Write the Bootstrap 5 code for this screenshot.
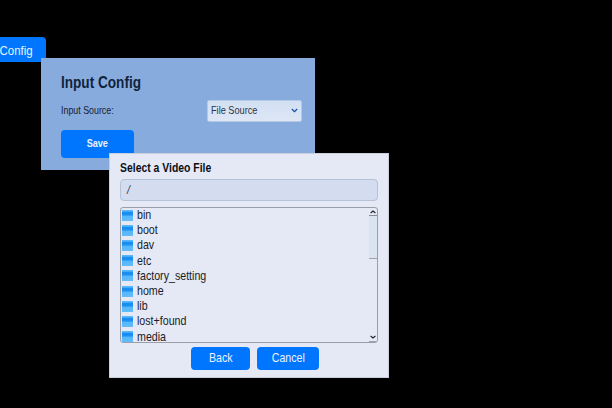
<!DOCTYPE html>
<html lang="en">
<head>
<meta charset="utf-8">
<title>Input Config</title>
<link href="https://cdn.jsdelivr.net/npm/bootstrap@5.3.0/dist/css/bootstrap.min.css" rel="stylesheet">
<style>
body{background:#000;width:612px;height:408px;font-family:"Liberation Sans",Arial,sans-serif;color:#14202e;line-height:1}
.stage{width:612px;height:408px}
.cond{display:inline-block;white-space:nowrap;transform:scaleX(.86);transform-origin:0 50%}
.mid{transform-origin:50% 50%}
.btn-app{background:#0075fd;color:#e9f3ff;border:0;border-radius:4px;padding:0;line-height:1;display:flex;align-items:center;justify-content:center;font-size:12.4px}
.tab-config{left:-30px;top:37px;width:75.5px;height:25px;border-radius:4px;font-size:13px;justify-content:flex-end;padding:1px 12.5px 0 0}
.tab-config .cond{transform:scaleX(.88);transform-origin:100% 50%}
.panel{left:41px;top:58px;width:273.5px;height:111.5px;background:#88abde;padding:16px 13px 0 20px}
.panel-title{font-size:15.8px;font-weight:700;height:17px;color:#10233c}
.source-row{margin-top:8px;height:23px;font-size:10.8px}
.source-row .cond{transform:scaleX(.82)}
.source-pick{width:94.5px;height:22px;background:linear-gradient(#d3e0f3,#dde6f5);border:1px solid #b5c8e6;border-radius:2px;padding:0 3px;font-size:11.2px;color:#2b3646}
.btn-save{width:73px;height:28px;margin-top:8px;padding-bottom:1px;font-size:11.4px;font-weight:700}
.btn-save .cond{transform:scaleX(.8)}
.dialog-box{left:109px;top:153px;width:279.5px;height:224.5px;background:#e5e9f5;border:1px solid #c9cedd;padding:7px 9.5px 0 10px}
.dialog-title{font-size:12.25px;font-weight:700;height:13px;color:#0b0e15}
.dialog-title .cond{transform:scaleX(.85)}
.path-box{margin-top:5px;height:22px;background:#d4ddf0;border:1px solid #b5c2d8;border-radius:4px;padding-left:6px;font-size:12.4px;font-style:italic;color:#30394a}
.file-box{margin-top:6px;height:135.5px;border:1px solid #9a9ea9;border-radius:3px;overflow:hidden}
.file-list{margin-top:-.4px}
.file-row{height:15.2px;font-size:12.4px;padding-left:1px;color:#1a1d26}
.folder{width:11px;height:11px;margin-right:4px;background:linear-gradient(#58b8fa 0 10%,#1589ee 24%,#1e94f4 46%,#55b8fb 56%,#63bcfa 100%)}
.bar{width:8px;font-size:0}
.bar-thumb{height:44px;background:#dce3f0;border-top:1px solid #858b98;border-bottom:1px solid #9ba2b0}
.bar-end{border-bottom:1px solid #9ba2b0}
.actions{margin-top:4.5px;gap:7px;padding-left:12px}
.actions .btn-app{height:22.5px}
.btn-back{width:59px}.btn-cancel{width:62px}
</style>
</head>
<body class="overflow-hidden">
<main class="stage position-relative overflow-hidden">
  <button class="btn btn-app tab-config position-absolute"><span class="cond">Config</span></button>

  <section class="panel position-absolute">
    <h1 class="panel-title m-0"><span class="cond">Input Config</span></h1>
    <div class="source-row d-flex align-items-center justify-content-between">
      <span class="cond">Input Source:</span>
      <div class="source-pick d-flex align-items-center justify-content-between">
        <span class="cond">File Source</span>
        <svg width="7" height="5" viewBox="0 0 7 5" fill="none" stroke="#1b4fa0" stroke-width="1.3"><path d="M.8 1 3.5 3.6 6.2 1"/></svg>
      </div>
    </div>
    <button class="btn btn-app btn-save"><span class="cond mid">Save</span></button>
  </section>

  <section class="dialog-box position-absolute">
    <h2 class="dialog-title m-0"><span class="cond">Select a Video File</span></h2>
    <div class="path-box d-flex align-items-center"><span class="cond">/</span></div>
    <div class="file-box d-flex">
      <div class="file-list flex-grow-1">
        <div class="file-row d-flex align-items-center"><i class="folder"></i><span class="cond">bin</span></div>
        <div class="file-row d-flex align-items-center"><i class="folder"></i><span class="cond">boot</span></div>
        <div class="file-row d-flex align-items-center"><i class="folder"></i><span class="cond">dav</span></div>
        <div class="file-row d-flex align-items-center"><i class="folder"></i><span class="cond">etc</span></div>
        <div class="file-row d-flex align-items-center"><i class="folder"></i><span class="cond">factory_setting</span></div>
        <div class="file-row d-flex align-items-center"><i class="folder"></i><span class="cond">home</span></div>
        <div class="file-row d-flex align-items-center"><i class="folder"></i><span class="cond">lib</span></div>
        <div class="file-row d-flex align-items-center"><i class="folder"></i><span class="cond">lost+found</span></div>
        <div class="file-row d-flex align-items-center"><i class="folder"></i><span class="cond">media</span></div>
      </div>
      <div class="bar d-flex flex-column">
        <svg width="8" height="7" viewBox="0 0 8 7" fill="none" stroke="#20242c" stroke-width="1.2"><path d="M1.6 5 4 3 6.4 5"/></svg>
        <div class="bar-thumb"></div>
        <div class="bar-end mt-auto"><svg width="8" height="8" viewBox="0 0 8 8" fill="none" stroke="#20242c" stroke-width="1.2"><path d="M1.6 3 4 5 6.4 3"/></svg></div>
      </div>
    </div>
    <div class="actions d-flex justify-content-center">
      <button class="btn btn-app btn-back"><span class="cond mid">Back</span></button>
      <button class="btn btn-app btn-cancel"><span class="cond mid">Cancel</span></button>
    </div>
  </section>
</main>
<script src="https://cdn.jsdelivr.net/npm/bootstrap@5.3.0/dist/js/bootstrap.bundle.min.js"></script>
</body>
</html>
